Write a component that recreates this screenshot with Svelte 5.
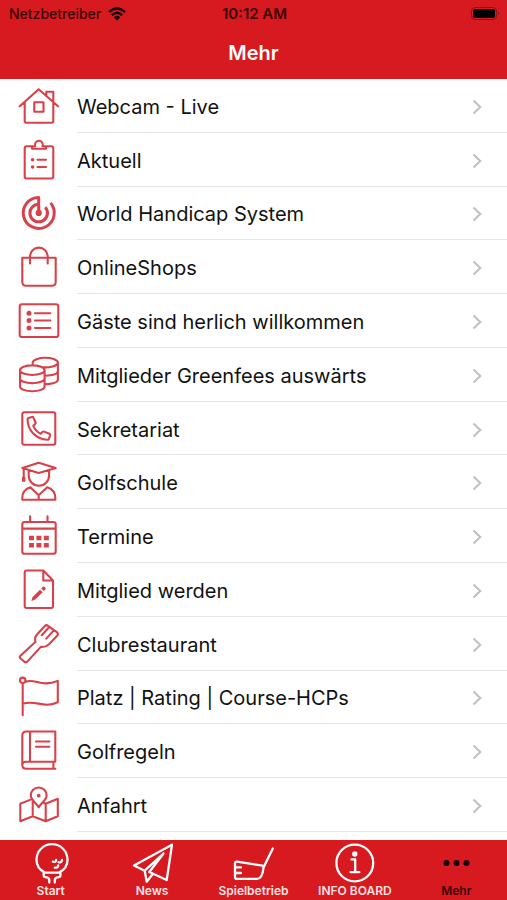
<script>
  // Every icon is drawn on a 42 x 42 grid: "line" is stroked, "solid" is filled.
  const dot = (x, y, r) => `M${x - r} ${y}a${r} ${r} 0 1 0 ${2 * r} 0a${r} ${r} 0 1 0 ${-2 * r} 0z`;
  const block = (x, y) => `M${x} ${y}h5v4.5h-5z`;

  const entries = [
    {
      label: 'Webcam - Live',
      line: 'M1.7 21.3 20.7 4.3 40 21.3M6.7 17.5V36q0 1.7 1.7 1.7H33.6q1.7 0 1.7-1.7V17M28.3 10.5V6.7H35.3V16.5M16.3 17.3h9.2v9.4h-9.2z'
    },
    {
      label: 'Aktuell',
      line: 'M14 7.2H8.7q-2 0-2 2V37.5q0 2 2 2H33.3q2 0 2-2V9.2q0-2-2-2H28M14 7.2V9.7H28V7.2H24.5A3.9 3.9 0 1 0 17.3 7.2H14M19.5 20.7H28M19.5 28H28',
      solid: dot(14.6, 20.7, 1.8) + dot(14.6, 28, 1.8)
    },
    {
      label: 'World Handicap System',
      line: 'M20.7 20.8V5.4A15.5 15.5 0 1 0 32.6 10.9M20.7 12.2A8.8 8.8 0 1 0 27.3 15.2',
      solid: dot(20.7, 20.9, 3.1),
      heavy: true
    },
    {
      label: 'OnlineShops',
      line: 'M4.3 11.8H37.7V36q0 3.7-3.7 3.7H8q-3.7 0-3.7-3.7zM12 17.5V10.5a8.8 8.8 0 0 1 17.7 0v7'
    },
    {
      label: 'Gäste sind herlich willkommen',
      line: 'M4 4.2H38q2.3 0 2.3 2.3V34.7q0 2.3-2.3 2.3H4q-2.3 0-2.3-2.3V6.5q0-2.3 2.3-2.3zM17 13.2H32.3M17 20.5H32.3M17 28H32.3',
      solid: dot(11, 13.2, 2.5) + dot(11, 20.5, 2.5) + dot(11, 28, 2.5)
    },
    {
      label: 'Mitglieder Greenfees auswärts',
      line: 'M2 16.2a12.3 4.8 0 1 0 24.6 0a12.3 4.8 0 1 0-24.6 0V32.5a12.3 4.8 0 0 0 24.6 0V16.2M2 24.4a12.3 4.8 0 0 0 24.6 0M14.7 11V8.6a12.6 4.8 0 1 1 25.2 0a12.6 4.8 0 0 1-16.5 4.5M39.9 8.6V25.5q0 4.3-13.2 4.8M39.9 17q0 4.2-13.2 4.8'
    },
    {
      label: 'Sekretariat',
      line: 'M6.3 4.3H35.3q2 0 2 2V34.7q0 2-2 2H6.3q-2 0-2-2V6.3q0-2 2-2zM9.5 11Q9.7 10.3 10.5 10L14 8.9Q15 8.6 15.4 9.6L17.6 14.5Q18 15.4 17.2 16L15.3 17.8Q17.5 23 22.6 25.8L24.5 23.9Q25.2 23.2 26.2 23.6L31.4 25.8Q32.4 26.3 32.1 27.3L30.9 31Q30.6 31.9 29.6 31.8C18 31.1 9.6 22.5 9.5 11z'
    },
    {
      label: 'Golfschule',
      line: 'M4.3 6.9 20.7 1.7 37.7 6.9 20.7 12zM5.7 7.5V19.7M10.7 9.3V14.5a10.2 10.2 0 0 0 20.4 0V9.3M12.3 26.3Q4.3 29 4.3 37V38.8H37.3V37Q37.3 29 29.2 26.3L20.7 34.3zM20.7 34.3V38.8',
      solid: 'M4 16h3.4v4.6h-3.4z'
    },
    {
      label: 'Termine',
      line: 'M6.6 7H35.4q2.3 0 2.3 2.3V36.5q0 2.3-2.3 2.3H6.6q-2.3 0-2.3-2.3V9.3Q4.3 7 6.6 7zM4.3 13.6H37.7M12.1 1.2V7M29.5 1.2V7',
      solid: block(11, 20.7) + block(18.4, 20.7) + block(25.8, 20.7) + block(11, 28) + block(18.4, 28) + block(25.8, 28)
    },
    {
      label: 'Mitglied werden',
      line: 'M25.3 1.5H8.7q-2 0-2 2V37q0 2 2 2H33q2 0 2-2V11.5zM25.3 1.5V11.5H35',
      solid: 'M13.3 32 14.6 27.9 22 20.7 24.7 23.3 17.3 30.5zM23.2 19.5 24.5 18.1Q25.8 17 27.1 18.2Q28.3 19.5 27.2 20.8L25.9 22.1z'
    },
    {
      label: 'Clubrestaurant',
      line: 'M2.5 32.7 17.6 18.8Q16.2 15 18.6 12L26.8 3Q28.4 1.4 30 2.8L38.8 9.2Q40.6 10.6 39.4 12.4L31 21.2Q27.2 24.6 22.8 23.9L9.3 38.6Q7.8 40 6.4 38.7L2.4 35.2Q1.2 34 2.5 32.7zM31 4.2 23.8 12.2M35.6 7.6 28.2 15.6'
    },
    {
      label: 'Platz | Rating | Course-HCPs',
      line: 'M2 4.3a2.7 2.7 0 1 0 5.4 0a2.7 2.7 0 1 0-5.4 0M4.7 7V39.3M7.4 5.8C17 1.8 23 11.8 39.8 4.9V26.2C25 33 18 23.3 4.7 27.8'
    },
    {
      label: 'Golfregeln',
      line: 'M37.3 31.8V1.5H8.3q-4 0-4 4V35q0 3.8 4 3.8H37.3M37.3 31.8H8.3q-4 0-4 3.5M12 1.5V31.8M35.4 31.8V38.8M18 11.5H31.3M18 16.8H31.3'
    },
    {
      label: 'Anfahrt',
      line: 'M12.6 15.6 2.3 19.8V37.2L14.7 32.2 27.7 37.2 39.8 32.2V14.7L27.7 19.8V37M27.7 19.8 26 19M14.7 18V32M20.7 23.4C18.8 19.2 12.8 16.2 12.8 11.4a7.9 7.9 0 0 1 15.8 0C28.6 16.2 22.6 19.2 20.7 23.4z',
      solid: dot(20.7, 11.7, 1.9)
    }
  ];

  const tabs = [
    {
      label: 'Start',
      line: 'M15 30.6C9.5 27.9 6.5 23.4 6.5 17.7a15.5 15.5 0 0 1 31 0C37.5 23.4 34.5 27.9 29 30.6M13.7 30.6H30.4V33.5Q30.4 35 28.5 35.2Q24.8 35.6 24.8 38V40.5M13.7 30.6V33.5Q13.7 35 15.6 35.2Q19.3 35.6 19.3 38V40.5M22.8 19.6Q25.8 20.6 26.2 17.8M28.6 20.2Q31.8 21 32 18M24.8 25.6Q28 26.2 28.2 23.4'
    },
    {
      label: 'News',
      line: 'M41 2.7 3 23.5 13.7 28.7 32.5 11.5 18.3 30 35.7 38zM13.7 28.7 15.7 39.7 21.7 32'
    },
    {
      label: 'Spielbetrieb',
      line: 'M39.8 6.5 30.5 25.5Q29.5 36.8 24 36.9H4Q2 36.9 2 34.9V21.7Q2 19.6 4 19.7L29.5 23.7M2.5 25.3H8M2.5 31H8'
    },
    {
      label: 'INFO BOARD',
      line: 'M2.4 21a18.4 18.4 0 1 0 36.8 0a18.4 18.4 0 1 0-36.8 0M17.5 17.4H21.2V30M16.6 30.2H25.3',
      solid: dot(20.8, 12, 2.7)
    },
    {
      label: 'Mehr',
      solid: dot(11.5, 21, 3) + dot(21.5, 21, 3) + dot(31.5, 21, 3),
      current: true
    }
  ];
</script>

{#snippet icon(item)}
  <svg class="icon" class:heavy={item.heavy} viewBox="0 0 42 42" aria-hidden="true">
    {#if item.line}<path class="line" d={item.line} />{/if}
    {#if item.solid}<path class="solid" d={item.solid} />{/if}
  </svg>
{/snippet}

<div class="screen">
  <header>
    <div class="status">
      <span class="carrier">
        Netzbetreiber
        <svg class="wifi" viewBox="0 0 18 14" aria-hidden="true">
          <path d="M1 5.2Q9-2.2 17 5.2M3.9 8.2Q9 3.5 14.1 8.2" />
          <path class="core" d="M5.8 10.2Q9 7.4 12.2 10.2L9 13.5z" />
        </svg>
      </span>
      <span class="time">10:12 AM</span>
      <svg class="battery" viewBox="0 0 29 14" aria-hidden="true">
        <rect class="case" x="0.5" y="0.5" width="25" height="12" rx="3.5" />
        <rect x="2" y="2" width="22" height="9" rx="2" />
        <path class="cap" d="M27 4.5q2 2 0 4z" />
      </svg>
    </div>
    <h1>Mehr</h1>
  </header>

  <main>
    <ul>
      {#each entries as entry}
        <li>
          <a href="#top">
            {@render icon(entry)}
            <span class="text">
              <span>{entry.label}</span>
              <svg class="chevron" viewBox="0 0 10 16" aria-hidden="true"><path d="M1.5 1.5 8.3 8 1.5 14.5" /></svg>
            </span>
          </a>
        </li>
      {/each}
    </ul>
  </main>

  <nav>
    {#each tabs as tab}
      <button type="button" class:current={tab.current}>
        {@render icon(tab)}
        <span>{tab.label}</span>
      </button>
    {/each}
  </nav>
</div>

<style>
  :global(body) {
    margin: 0;
    background: #fff;
  }
  .screen {
    display: flex;
    flex-direction: column;
    min-height: 100vh;
    font-family: Inter, 'Liberation Sans', sans-serif;
    color: #111;
  }
  header {
    background: #d71920;
  }
  .status {
    display: grid;
    grid-template-columns: 1fr auto 1fr;
    align-items: center;
    height: 27px;
    padding: 0 7px 0 9px;
    font-size: 14px;
    font-weight: 500;
    color: #3a0507;
  }
  .carrier {
    display: flex;
    align-items: center;
    gap: 7px;
  }
  .wifi {
    width: 18px;
    height: 14px;
    fill: none;
    stroke: #140102;
    stroke-width: 2.4;
  }
  .wifi .core {
    fill: #140102;
    stroke: none;
  }
  .time {
    font-size: 15px;
    font-weight: 600;
  }
  .battery {
    justify-self: end;
    width: 29px;
    height: 14px;
    fill: #000;
  }
  .battery .case {
    fill: none;
    stroke: #8e1015;
  }
  .battery .cap {
    fill: #8e1015;
  }
  h1 {
    margin: 0;
    line-height: 52px;
    text-align: center;
    font-size: 20px;
    font-weight: 600;
    color: #fff;
  }
  main {
    flex: 1;
    display: flex;
    padding-bottom: 8px;
  }
  ul {
    flex: 1;
    display: flex;
    flex-direction: column;
    margin: 0;
    padding: 0;
    list-style: none;
  }
  li {
    flex: 1;
    display: flex;
    min-height: 44px;
  }
  a {
    flex: 1;
    display: flex;
    align-items: center;
    gap: 17px;
    padding-left: 18px;
    color: inherit;
    text-decoration: none;
  }
  .icon {
    flex: none;
    width: 42px;
    height: 42px;
    color: #d9414a;
  }
  .line {
    fill: none;
    stroke: currentColor;
    stroke-width: 2.1;
    stroke-linecap: round;
    stroke-linejoin: round;
  }
  .heavy .line {
    stroke-width: 3;
    stroke-linecap: butt;
  }
  .solid {
    fill: currentColor;
  }
  .text {
    flex: 1;
    align-self: stretch;
    display: flex;
    align-items: center;
    justify-content: space-between;
    padding: 3px 25px 0 0;
    border-bottom: 1px solid #e6e6e6;
    font-size: 20px;
    line-height: 24px;
  }
  .chevron {
    width: 10px;
    height: 16px;
    fill: none;
    stroke: #c0c0c2;
    stroke-width: 2;
  }
  nav {
    display: flex;
    height: 60px;
    background: #d71920;
  }
  button {
    flex: 1 1 0;
    min-width: 0;
    display: flex;
    flex-direction: column;
    align-items: center;
    margin: 0;
    padding: 2px 0 0;
    border: 0;
    background: none;
    font-family: inherit;
    font-size: 12px;
    font-weight: 600;
    line-height: 14px;
    white-space: nowrap;
    color: #ffe2e2;
  }
  button .icon {
    color: #fff;
  }
  button .line {
    stroke-width: 2.3;
  }
  button.current {
    color: #3a0507;
  }
  button.current .icon {
    color: #140102;
  }
</style>
